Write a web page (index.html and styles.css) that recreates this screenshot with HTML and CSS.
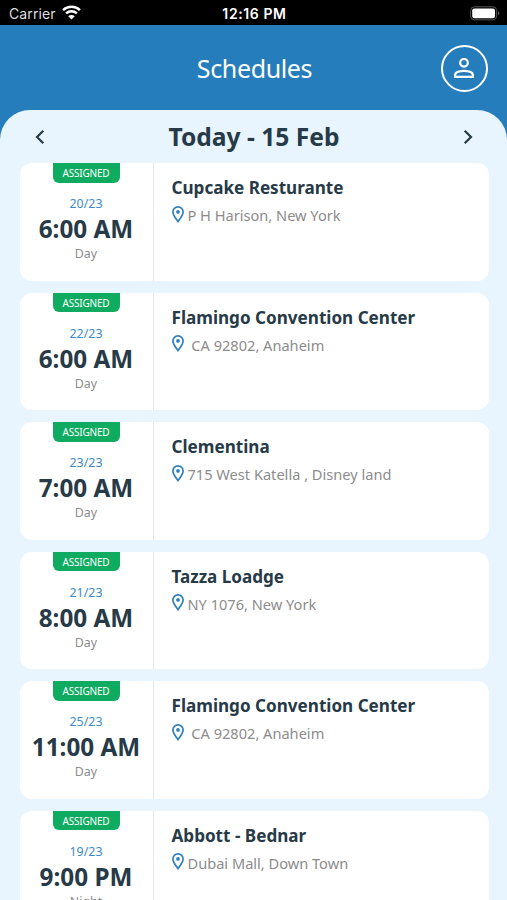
FILE: index.html
```html
<!DOCTYPE html>
<html lang="en">

<head>
  <meta charset="UTF-8">
  <title>Schedules</title>
  <link rel="stylesheet" href="styles.css">
</head>

<body>
  <div class="app">
    <div class="status">
      <div class="carrier">
        <span>Carrier</span>
        <svg class="wifi" viewBox="0 0 18 14" width="19" height="15">
          <path d="M1 4.800a11.600 11.600 0 0 1 16 0M3.900 7.900a7.400 7.400 0 0 1 10.200 0" fill="none" stroke="#fff" stroke-width="2.3" />
          <path d="M9 13.600 5.900 10.600a4.400 4.400 0 0 1 6.200 0z" fill="#fff" />
        </svg>
      </div>
      <div class="clock">12:16 PM</div>
      <div class="battery">
        <svg viewBox="0 0 30 15" width="30" height="15">
          <rect x=".6" y=".8" width="26" height="13" rx="3.8" fill="none" stroke="#555" stroke-width="1" />
          <rect x="2.2" y="2.4" width="22.8" height="9.8" rx="2.2" fill="#fff" />
          <path d="M28 5.3c2 .8 2 3.2 0 4z" fill="#555" />
        </svg>
      </div>
    </div>

    <div class="header">
      <h1>Schedules</h1>
      <a class="profile" href="#">
        <svg viewBox="0 0 20 20" width="20" height="20" fill="none" stroke="#fff" stroke-width="2.2">
          <circle cx="10" cy="4.8" r="3.8" />
          <path d="M1.100 18.900v-2c0-2.700 5-4.100 8.900-4.100s8.900 1.400 8.900 4.100v2z" />
        </svg>
      </a>
    </div>

    <div class="main">
      <div class="date">
        <a href="#"><svg viewBox="0 0 10 16" width="10" height="16"><path d="M8.300 1.700 2 8l6.300 6.300" /></svg></a>
        <h2>Today - 15 Feb</h2>
        <a href="#"><svg viewBox="0 0 10 16" width="10" height="16"><path d="M1.700 1.700 8 8l-6.300 6.300" /></svg></a>
      </div>
      <ul class="list" id="list"></ul>
    </div>
  </div>

  <script>
    var schedules = [
      { count: '20/23', time: '6:00 AM', shift: 'Day', name: 'Cupcake Resturante', address: 'P H Harison, New York' },
      { count: '22/23', time: '6:00 AM', shift: 'Day', name: 'Flamingo Convention Center', address: ' CA 92802, Anaheim' },
      { count: '23/23', time: '7:00 AM', shift: 'Day', name: 'Clementina', address: '715 West Katella , Disney land' },
      { count: '21/23', time: '8:00 AM', shift: 'Day', name: 'Tazza Loadge', address: 'NY 1076, New York' },
      { count: '25/23', time: '11:00 AM', shift: 'Day', name: 'Flamingo Convention Center', address: ' CA 92802, Anaheim' },
      { count: '19/23', time: '9:00 PM', shift: 'Night', name: 'Abbott - Bednar', address: 'Dubai Mall, Down Town' }
    ];

    var pin = '<svg class="pin" viewBox="0 0 12 17" width="12" height="17">' +
      '<path d="M6 .9C3.100.9.9 3.100.9 5.900c0 3.500 3.400 7 5.100 9.700 1.700-2.700 5.100-6.200 5.100-9.700C11.100 3.100 8.900.9 6 .9z" fill="none" stroke="#2f80bd" stroke-width="1.700"/>' +
      '<circle cx="6" cy="5.900" r="1.900" fill="#2f80bd"/></svg>';

    var html = '';
    for (var i = 0; i < schedules.length; i++) {
      var s = schedules[i];
      html += '<li class="card">' +
        '<div class="when">' +
        '<span class="badge">ASSIGNED</span>' +
        '<span class="count">' + s.count + '</span>' +
        '<span class="time">' + s.time + '</span>' +
        '<span class="shift">' + s.shift + '</span>' +
        '</div>' +
        '<div class="where">' +
        '<h3>' + s.name + '</h3>' +
        '<p>' + pin + '<span>' + s.address + '</span></p>' +
        '</div></li>';
    }
    document.getElementById('list').innerHTML = html;
  </script>
</body>

</html>
```
FILE: styles.css
```css
body,
h1,
h2,
h3,
p,
ul {
  margin: 0;
  padding: 0;
}

body {
  font-family: "Noto Sans", sans-serif;
  color: #263a47;
  background: #e8f5fe;
}

ul {
  list-style: none;
}

svg {
  display: block;
}

.app {
  height: 900px;
  overflow: hidden;
  background: #257dbb;
}

/* status bar */
.status {
  display: grid;
  grid-template-columns: 1fr auto 1fr;
  align-items: center;
  box-sizing: border-box;
  height: 25px;
  padding: 2px 7px 0 9px;
  background: #000;
  color: #fff;
  font: 14px/20px Inter, sans-serif;
}

.carrier {
  display: flex;
  align-items: center;
  gap: 6px;
  color: #ddd;
  letter-spacing: .1px;
}

.wifi {
  margin-top: -2px;
}

.clock {
  font-weight: 600;
  letter-spacing: .6px;
}

.battery {
  justify-self: end;
}

/* header */
.header {
  display: grid;
  grid-template-columns: 1fr auto 1fr;
  align-items: center;
  height: 84.5px;
  padding: 2px 19px 0;
  box-sizing: border-box;
}

.header h1 {
  grid-column: 2;
  padding-left: 2px;
  font-size: 25px;
  font-weight: 400;
  line-height: 34px;
  letter-spacing: -.35px;
  color: #fff;
}

.profile {
  display: flex;
  align-items: center;
  justify-content: center;
  justify-self: end;
  box-sizing: border-box;
  width: 47px;
  height: 47px;
  padding-right: 1px;
  border: 2px solid #fff;
  border-radius: 50%;
}

.main {
  height: 790.5px;
  border-radius: 30px 30px 0 0;
  background: #e8f5fe;
}

.date {
  display: flex;
  align-items: center;
  justify-content: space-between;
  box-sizing: border-box;
  height: 53.5px;
  padding: 1.5px 34px 0 35px;
}

.date h2 {
  font-size: 24.6px;
  line-height: 34px;
}

.date path {
  fill: none;
  stroke: #263a47;
  stroke-width: 2.2;
}

/* cards */
.list {
  display: flex;
  flex-direction: column;
  gap: 12px;
  padding: 0 18.5px 0 19.5px;
}

.card {
  display: flex;
  flex: none;
  height: 117.5px;
  border-radius: 12px;
  background: #fff;
}

.when {
  display: flex;
  flex-direction: column;
  align-items: center;
  width: 133px;
  border-right: 1px solid #e3e8eb;
}

.badge {
  width: 67px;
  height: 19.5px;
  border-radius: 0 0 6px 6px;
  background: #0fab60;
  color: #fff;
  font-size: 10px;
  line-height: 20.5px;
  letter-spacing: -.2px;
  text-align: center;
}

.count {
  margin-top: 12.5px;
  font-size: 12.4px;
  line-height: 18px;
  color: #3d8bc8;
}

.time {
  font-size: 24.3px;
  font-weight: 700;
  line-height: 32px;
}

.shift {
  font-size: 12.4px;
  line-height: 18px;
  color: #8c8c8c;
}

.where {
  flex: 1;
  padding: 13px 0 0 18px;
}

.where h3 {
  font-size: 17.1px;
  line-height: 24px;
}

.where p {
  display: flex;
  align-items: center;
  gap: 4px;
  margin-top: 5px;
  font-size: 14.6px;
  line-height: 20px;
  white-space: pre;
  color: #8c8c8c;
}

.pin {
  margin-top: -2px;
}
```
